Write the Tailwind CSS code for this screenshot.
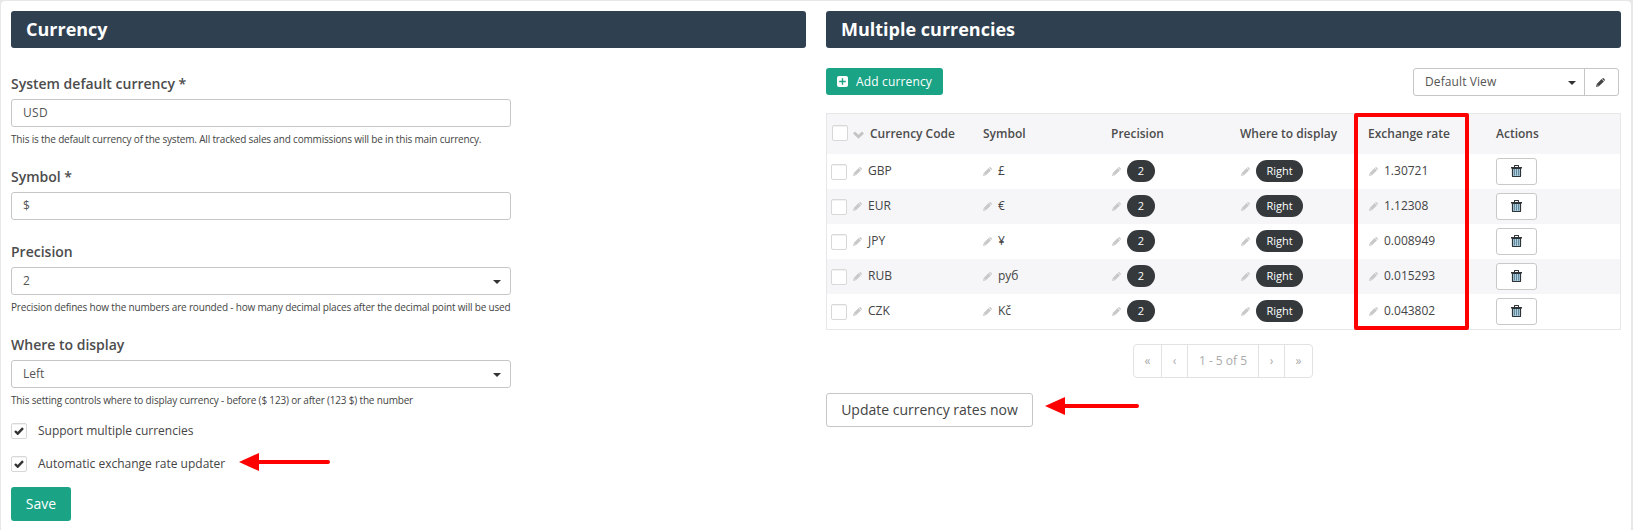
<!DOCTYPE html>
<html lang="en">
  <head>
    <meta charset="UTF-8" />
    <title>Currency settings</title>
    <script src="https://cdn.jsdelivr.net/npm/@tailwindcss/browser@4"></script>
  </head>
  <body class="bg-[#e7e7e8] font-['Open_Sans','Noto_Sans',sans-serif] text-[#444]">
    <svg class="hidden">
      <symbol id="pencil" viewBox="0 0 10 10">
        <path d="M0 10l.8-3.200L6.200 1.200l2.600 2.600L3.200 9.200zM6.800 .8l.6-.6q.5-.4 1 0l1.400 1.400q.4.5 0 1l-.6.6z" fill="currentColor" />
        <path d="M1.200 7.400l1.400 1.400" stroke="#fff" stroke-width=".6" />
      </symbol>
      <symbol id="trash" viewBox="0 0 11 12">
        <path d="M0 2h11v1.500H0zM3 2V.6q0-.6.6-.6h3.800q.6 0 .6.6V2H7V1H4v1z" fill="#2d3336" />
        <path d="M1.500 3.500h8v7.500q0 .5-.5.5H2q-.5 0-.5-.5z" fill="#a9cfe2" stroke="#2d3336" stroke-width="1.200" />
        <path d="M3.500 4v6.500M5.500 4v6.500M7.500 4v6.500" stroke="#4b6575" stroke-width=".7" />
      </symbol>
      <symbol id="check" viewBox="0 0 10 8">
        <path d="M1 4l2.700 2.700L9 1.200" fill="none" stroke="#333" stroke-width="2.400" />
      </symbol>
    </svg>

    <div class="mt-px ml-px mr-0.5 h-[529px] bg-white rounded-t-sm pt-2.5 pl-2.5 pr-2.5 flex gap-5 overflow-hidden">
      <!-- Default currency form -->
      <section class="w-[795px]">
        <h2 class="h-[37px] rounded-[3px] bg-[#2f4050] text-white text-lg leading-[36px] font-bold pl-[15px]">Currency</h2>

        <div class="w-[500px] mt-[25px]">
          <label class="block h-[22px] leading-[22px] text-sm font-semibold text-[#4c4c4c]">System default currency *</label>
          <div class="mt-1 h-7 border border-[#c6c6c6] rounded-[3px] px-[11px] text-xs tracking-[0.3px] leading-[25px] text-[#555]">USD</div>
          <p class="mt-1 h-4 text-[10px] leading-4 tracking-[-0.18px] whitespace-nowrap">This is the default currency of the system. All tracked sales and commissions will be in this main currency.</p>

          <label class="block mt-[19px] h-[22px] leading-[22px] text-sm font-semibold text-[#4c4c4c]">Symbol *</label>
          <div class="mt-1 h-7 border border-[#c6c6c6] rounded-[3px] px-[11px] text-xs leading-[26px] text-[#555]">$</div>

          <label class="block mt-[21px] h-[22px] leading-[22px] text-sm font-semibold text-[#4c4c4c]">Precision</label>
          <div class="mt-1 h-7 border border-[#c6c6c6] rounded-[3px] pl-[11px] pr-[9px] pb-px text-xs leading-[25px] text-[#555] flex items-center justify-between">
            2
            <svg class="w-2 h-1 mt-[3px]" viewBox="0 0 8 4"><path d="M0 0h8L4 4z" fill="#333" /></svg>
          </div>
          <p class="mt-1 h-4 text-[10px] leading-4 tracking-[-0.18px] whitespace-nowrap">Precision defines how the numbers are rounded - how many decimal places after the decimal point will be used</p>

          <label class="block mt-[19px] h-[22px] leading-[22px] text-sm font-semibold text-[#4c4c4c]">Where to display</label>
          <div class="mt-1 h-7 border border-[#c6c6c6] rounded-[3px] pl-[11px] pr-[9px] pb-px text-xs leading-[25px] text-[#555] flex items-center justify-between">
            Left
            <svg class="w-2 h-1 mt-[3px]" viewBox="0 0 8 4"><path d="M0 0h8L4 4z" fill="#333" /></svg>
          </div>
          <p class="mt-1 h-4 text-[10px] leading-4 tracking-[-0.18px] whitespace-nowrap">This setting controls where to display currency - before ($ 123) or after (123 $) the number</p>

          <div class="mt-[15px] h-4 flex items-center">
            <span class="size-4 border border-[#d8d8d8] rounded-[2px] inset-shadow-2xs flex items-center justify-center"><svg class="w-2.5 h-2"><use href="#check" /></svg></span>
            <span class="ml-[11px] text-xs">Support multiple currencies</span>
          </div>
          <div class="mt-[17px] h-4 flex items-center">
            <span class="size-4 border border-[#d8d8d8] rounded-[2px] inset-shadow-2xs flex items-center justify-center"><svg class="w-2.5 h-2"><use href="#check" /></svg></span>
            <span class="ml-[11px] text-xs">Automatic exchange rate updater</span>
            <svg class="ml-3.5 -mt-1 w-[94px] h-[18px]" viewBox="0 0 94 18">
              <path d="M0 9L20 0v18z" fill="#f00" />
              <path d="M18 9h71" stroke="#f00" stroke-width="4" stroke-linecap="round" />
            </svg>
          </div>
          <button class="block mt-[15px] w-[60px] h-[34px] rounded-[3px] bg-[#1aa385] text-white text-sm">Save</button>
        </div>
      </section>

      <!-- Currency list -->
      <section class="w-[795px]">
        <h2 class="h-[37px] rounded-[3px] bg-[#2f4050] text-white text-lg leading-[36px] font-bold pl-[15px]">Multiple currencies</h2>

        <div class="mt-5 mr-0.5 flex justify-between items-start">
          <button class="w-[117px] h-[27px] rounded-[3px] bg-[#1aa385] text-white text-xs tracking-[0.15px] flex items-center pl-[11px]">
            <svg class="size-[11px] mr-2" viewBox="0 0 11 11">
              <rect width="11" height="11" rx="2" fill="#fff" />
              <path d="M5.500 2.200v6.600M2.200 5.500h6.600" stroke="#1aa385" stroke-width="1.400" />
            </svg>
            Add currency
          </button>
          <div class="w-[206px] h-7 border border-[#c6c6c6] rounded-[3px] flex text-xs tracking-[0.1px] leading-[26px] text-[#555]">
            <div class="w-[171px] border-r border-[#c6c6c6] pl-[11px] pr-2 flex items-center justify-between">
              Default View
              <svg class="w-2 h-1 mt-0.5" viewBox="0 0 8 4"><path d="M0 0h8L4 4z" fill="#333" /></svg>
            </div>
            <div class="flex-1 flex items-center justify-center"><svg class="size-[9px] mr-0.5 text-[#444]"><use href="#pencil" /></svg></div>
          </div>
        </div>

        <div class="relative mt-[17px] h-[217px] border border-[#e7e7e8]">
          <div class="grid grid-cols-[155px_129px_129px_128px_128px_1fr] h-10 items-center bg-[#f6f6f9] text-xs font-semibold text-[#4c4c4c]">
            <div class="pl-[5px] flex items-center">
              <span class="size-4 -mt-0.5 bg-white border border-[#d8d8d8] rounded-[2px] inset-shadow-2xs"></span>
              <svg class="ml-[5px] mt-0.5 w-[11px] h-2" viewBox="0 0 11 8"><path d="M1 1.500l4.500 4.300L10 1.500" fill="none" stroke="#c4c4c4" stroke-width="3" /></svg>
              <span class="ml-1.5">Currency Code</span>
            </div>
            <div class="pl-px">Symbol</div>
            <div>Precision</div>
            <div>Where to display</div>
            <div>Exchange rate</div>
            <div>Actions</div>
          </div>
          <div id="rows"></div>
          <div class="absolute left-[527px] -top-px w-[115px] h-[217px] border-4 border-[#f00] rounded-[2px]"></div>
        </div>

        <div class="mt-3.5 ml-[307px] w-[180px] h-[34px] border border-[#e2e2e2] rounded-[4px] flex text-xs leading-8 text-[#aaa] text-center divide-x divide-[#e2e2e2]">
          <span class="w-7">«</span>
          <span class="w-[26px]">‹</span>
          <span class="w-[71px]">1 - 5 of 5</span>
          <span class="w-[26px]">›</span>
          <span class="flex-1">»</span>
        </div>

        <div class="mt-[15px] flex">
          <button class="w-[207px] h-[34px] border border-[#c6c6c6] rounded-[3px] text-sm">Update currency rates now</button>
          <svg class="ml-3 mt-1 w-[96px] h-[18px]" viewBox="0 0 96 18">
            <path d="M0 9L20 0v18z" fill="#f00" />
            <path d="M18 9h74" stroke="#f00" stroke-width="4" stroke-linecap="round" />
          </svg>
        </div>
      </section>
    </div>

    <script>
      const currencies = [
        ["GBP", "£", "1.30721"],
        ["EUR", "€", "1.12308"],
        ["JPY", "¥", "0.008949"],
        ["RUB", "руб", "0.015293"],
        ["CZK", "Kč", "0.043802"],
      ];
      const pencil = `<svg class="size-[9px] mt-0.5 mr-1.5 ml-px text-[#c8c8c8] shrink-0"><use href="#pencil" /></svg>`;

      document.getElementById("rows").innerHTML = currencies
        .map(
          ([code, symbol, rate]) => `
          <div class="grid grid-cols-[155px_129px_129px_128px_128px_1fr] h-[35px] pb-0.5 items-center even:bg-[#f6f6f9] text-xs">
            <div class="pl-1 flex items-center">
              <span class="size-4 mt-[3px] mr-[5px] bg-white border border-[#d8d8d8] rounded-[2px] inset-shadow-2xs"></span>
              ${pencil}${code}
            </div>
            <div class="flex items-center">${pencil}${symbol}</div>
            <div class="flex items-center">${pencil}<span class="w-7 h-[22px] rounded-full bg-[#35393c] text-white text-[11px] leading-[22px] text-center">2</span></div>
            <div class="flex items-center">${pencil}<span class="w-[47px] h-[22px] rounded-full bg-[#35393c] text-white text-[11px] leading-[22px] text-center">Right</span></div>
            <div class="flex items-center">${pencil}${rate}</div>
            <div><span class="mt-px w-[41px] h-[27px] bg-white border border-[#c9c9c9] rounded-[3px] flex items-center justify-center"><svg class="w-[11px] h-3"><use href="#trash" /></svg></span></div>
          </div>`
        )
        .join("");
    </script>
  </body>
</html>
